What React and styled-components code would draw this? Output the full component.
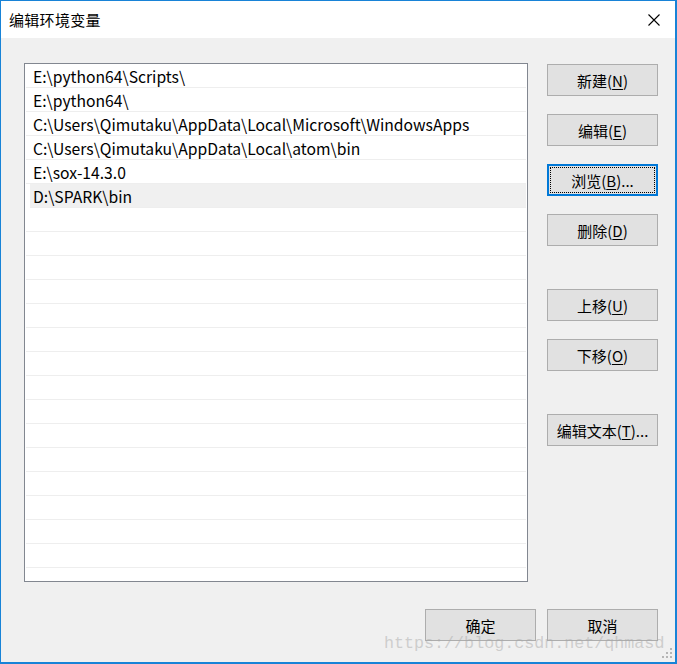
import styled, { createGlobalStyle } from 'styled-components'

const GlobalStyle = createGlobalStyle`
  html, body {
    margin: 0;
    padding: 0;
    background: #ffffff;
  }
  * {
    box-sizing: border-box;
  }
`

const uiFont = `"Noto Sans CJK SC", "Noto Sans", sans-serif`

const Window = styled.div`
  position: relative;
  width: 677px;
  height: 664px;
  border: 1px solid #1883d7;
  border-right-width: 2px;
  border-bottom-width: 2px;
  display: flex;
  flex-direction: column;
  font-family: ${uiFont};
  background: #f0f0f0;
  overflow: hidden;
`

const TitleBar = styled.div`
  height: 37px;
  flex: none;
  background: #ffffff;
  display: flex;
  align-items: center;
  justify-content: space-between;
  padding: 0 12px 0 8px;
`

const Title = styled.div`
  font-size: 15px;
  color: #000;
  letter-spacing: 0.3px;
`

const CloseIcon = styled.svg`
  width: 14px;
  height: 14px;
  margin-right: 2px;
`

const Body = styled.div`
  flex: 1;
  display: flex;
  flex-direction: column;
  padding: 25px 17px 0 23px;
`

const Main = styled.div`
  display: flex;
  gap: 19px;
`

const ListBox = styled.div`
  width: 504px;
  height: 519px;
  border: 1px solid #828790;
  background: #ffffff;
  padding: 0 1px 0 1px;
  overflow: hidden;
`

const Row = styled.div`
  height: 24px;
  border-bottom: 1px solid #eeeeee;
  display: flex;
  align-items: center;
  padding-top: 2px;
  padding-left: ${props => (props.selected ? '3px' : '7px')};
  margin-left: ${props => (props.selected ? '4px' : '0')};
  background: ${props => (props.selected ? '#f0f0f0' : 'transparent')};
  font-size: 15.7px;
  color: #000;
  white-space: nowrap;
`

const SideColumn = styled.div`
  display: flex;
  flex-direction: column;
  padding-top: 1px;
`

const Button = styled.div`
  width: 111px;
  height: 32px;
  flex: none;
  margin-top: ${props => props.gap || 0}px;
  background: #e1e1e1;
  border: 1px solid #adadad;
  display: flex;
  align-items: center;
  justify-content: center;
  font-size: 15px;
  color: #000;
  position: relative;

  ${props => props.focused && `
    border: 2px solid #0078d7;
    &::after {
      content: '';
      position: absolute;
      inset: 1px;
      border: 1px dotted #000;
    }
  `}

  u {
    text-decoration: underline;
    text-underline-offset: 2px;
  }
`

const Footer = styled.div`
  display: flex;
  justify-content: flex-end;
  gap: 11px;
  margin-top: 27px;
`

const Watermark = styled.div`
  position: absolute;
  left: 383px;
  top: 633px;
  font-family: "Liberation Mono", monospace;
  font-size: 16.7px;
  color: rgba(170, 170, 170, 0.5);
  pointer-events: none;
  white-space: nowrap;
`

const Grip = styled.svg`
  position: absolute;
  right: 3px;
  bottom: 4px;
  width: 10px;
  height: 10px;
`

const paths = [
  'E:\\python64\\Scripts\\',
  'E:\\python64\\',
  'C:\\Users\\Qimutaku\\AppData\\Local\\Microsoft\\WindowsApps',
  'C:\\Users\\Qimutaku\\AppData\\Local\\atom\\bin',
  'E:\\sox-14.3.0',
  'D:\\SPARK\\bin',
]

const rowCount = 22

const sideButtons = [
  { label: '新建', key: 'N', gap: 0 },
  { label: '编辑', key: 'E', gap: 18 },
  { label: '浏览', key: 'B', gap: 18, more: true, focused: true },
  { label: '删除', key: 'D', gap: 18 },
  { label: '上移', key: 'U', gap: 43 },
  { label: '下移', key: 'O', gap: 18 },
  { label: '编辑文本', key: 'T', gap: 43, more: true },
]

export default function App() {
  const rows = Array.from({ length: rowCount }, (_, i) => paths[i] || '')
  return (
    <>
      <GlobalStyle />
      <Window>
        <TitleBar>
          <Title>编辑环境变量</Title>
          <CloseIcon viewBox="0 0 14 14">
            <path d="M1.5 1.5 L12.5 12.5 M12.5 1.5 L1.5 12.5" stroke="#000" strokeWidth="1.1" fill="none" />
          </CloseIcon>
        </TitleBar>
        <Body>
          <Main>
            <ListBox>
              {rows.map((text, i) => (
                <Row key={i} selected={i === 5}>{text}</Row>
              ))}
            </ListBox>
            <SideColumn>
              {sideButtons.map(b => (
                <Button key={b.key} gap={b.gap} focused={b.focused}>
                  {b.label}(<u>{b.key}</u>){b.more ? '...' : ''}
                </Button>
              ))}
            </SideColumn>
          </Main>
          <Footer>
            <Button>确定</Button>
            <Button>取消</Button>
          </Footer>
        </Body>
        <Watermark>https://blog.csdn.net/qhmasd</Watermark>
        <Grip viewBox="0 0 10 10">
          <rect x="8" y="0" width="2" height="2" fill="#b5b5b5" />
          <rect x="4" y="4" width="2" height="2" fill="#b5b5b5" />
          <rect x="8" y="4" width="2" height="2" fill="#b5b5b5" />
          <rect x="0" y="8" width="2" height="2" fill="#b5b5b5" />
          <rect x="4" y="8" width="2" height="2" fill="#b5b5b5" />
          <rect x="8" y="8" width="2" height="2" fill="#b5b5b5" />
        </Grip>
      </Window>
    </>
  )
}
